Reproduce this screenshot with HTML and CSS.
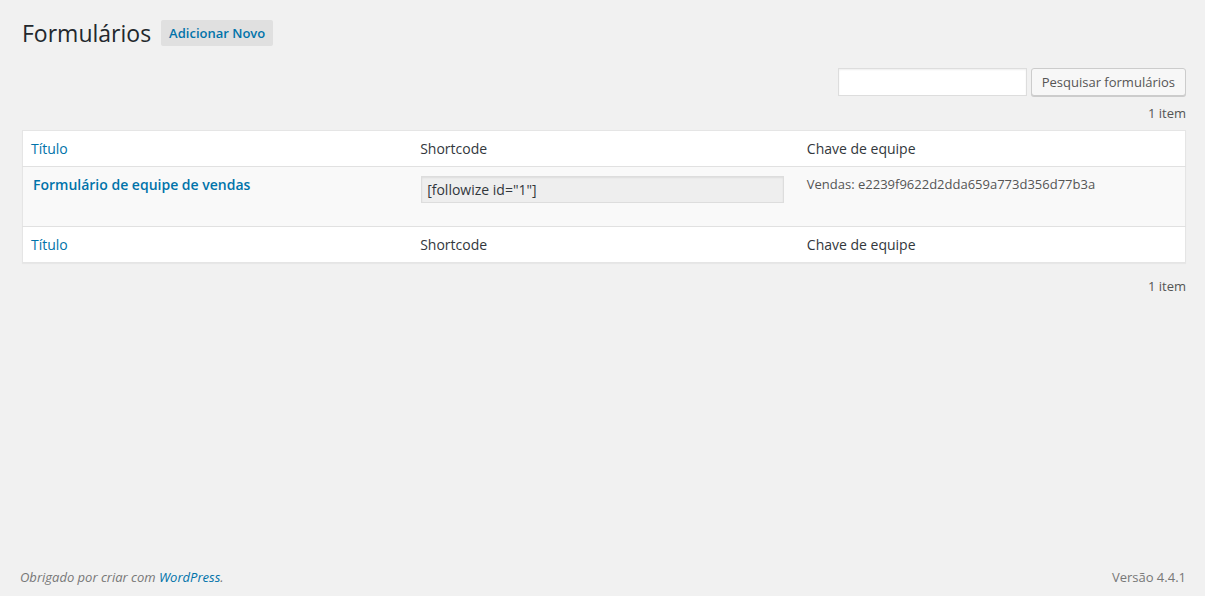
FILE: index.html
```html
<!DOCTYPE html>
<html lang="pt-BR">
<head>
<meta charset="utf-8">
<title>Formulários</title>
<link rel="stylesheet" href="styles.css">
</head>
<body>
<div class="wrap">
  <div class="page-head">
    <h1 class="page-title">Formulários</h1>
    <a class="page-title-action" href="#">Adicionar Novo</a>
  </div>
  <div class="search-box">
    <input class="search-input" type="search" aria-label="Pesquisar formulários">
    <button class="button" type="button">Pesquisar formulários</button>
  </div>
  <div class="tablenav"><span class="displaying-num">1 item</span></div>
  <table class="widefat">
    <colgroup><col><col><col></colgroup>
    <thead>
      <tr>
        <th class="col-title"><a href="#">Título</a></th>
        <th class="col-code">Shortcode</th>
        <th>Chave de equipe</th>
      </tr>
    </thead>
    <tbody>
      <tr class="row">
        <td class="cell-title"><a class="row-title" href="#">Formulário de equipe de vendas</a></td>
        <td class="cell-code"><input class="code-input" type="text" readonly value="[followize id=&quot;1&quot;]"></td>
        <td class="cell-key">Vendas: e2239f9622d2dda659a773d356d77b3a</td>
      </tr>
    </tbody>
    <tfoot>
      <tr>
        <th class="col-title"><a href="#">Título</a></th>
        <th class="col-code">Shortcode</th>
        <th>Chave de equipe</th>
      </tr>
    </tfoot>
  </table>
  <div class="tablenav bottom"><span class="displaying-num">1 item</span></div>
</div>
<footer class="footer">
  <span class="thanks">Obrigado por criar com <a href="#">WordPress</a>.</span>
  <span class="version">Versão 4.4.1</span>
</footer>
</body>
</html>
```

FILE: styles.css
```css
* { box-sizing: border-box; }
html, body { margin: 0; padding: 0; }
body {
  background: #f1f1f1;
  color: #444;
  font-family: "Open Sans", "DejaVu Sans", sans-serif;
  font-size: 13px;
  line-height: 1.4em;
  min-height: 100vh;
  display: flex;
  flex-direction: column;
}
a { color: #0073aa; text-decoration: none; }

.wrap {
  margin: 10px 19px 0 22px;
}
.page-head {
  display: flex;
  align-items: center;
  padding: 9px 0 4px 0;
}
.page-title {
  margin: 0;
  font-size: 23px;
  font-weight: 400;
  line-height: 29px;
  color: #23282d;
}
.page-title-action {
  margin-left: 10px;
  padding: 0 8px;
  height: 26px;
  line-height: 26px;
  background: #e0e0e0;
  border-radius: 2px;
  font-weight: 600;
  font-size: 13px;
  color: #0073aa;
  margin-top: -1px;
}
.search-box {
  display: flex;
  justify-content: flex-end;
  gap: 4px;
  margin-top: 16px;
}
.search-input {
  width: 189px;
  height: 28px;
  margin: 0;
  border: 1px solid #ddd;
  background: #fff;
  box-shadow: inset 0 1px 2px rgba(0,0,0,.07);
  font: inherit;
}
.button {
  height: 28px;
  margin: 0;
  padding: 0 10px 1px;
  border: 1px solid #ccc;
  border-radius: 3px;
  background: #f7f7f7;
  box-shadow: 0 1px 0 #ccc;
  color: #555;
  font-family: inherit;
  font-size: 13px;
  line-height: 26px;
  white-space: nowrap;
}
.tablenav {
  display: flex;
  justify-content: flex-end;
  height: 18px;
  margin: 8px 0 8px;
  line-height: 18px;
}
.tablenav.bottom { margin-top: 14px; }
.displaying-num { color: #555; }

.widefat {
  width: 100%;
  border-collapse: collapse;
  table-layout: fixed;
  background: #fff;
  border: 1px solid #e5e5e5;
  box-shadow: 0 1px 1px rgba(0,0,0,.04);
}
.widefat col { width: 33.333%; }
.widefat th {
  text-align: left;
  font-weight: 400;
  font-size: 14px;
  line-height: 19px;
  color: #32373c;
  padding: 8px 9px;
  height: 35px;
}
.widefat th.col-title { padding-left: 8px; }
.widefat th.col-code { padding-left: 10px; }
.widefat thead th { border-bottom: 1px solid #e1e1e1; }
.widefat tfoot th { border-top: 1px solid #e1e1e1; }
.row { background: #f9f9f9; }
.row td {
  vertical-align: top;
  padding: 8px 10px;
  height: 60px;
}
.row-title {
  font-size: 14px;
  font-weight: 600;
  line-height: 20px;
  display: block;
}
.row td.cell-code { padding-left: 11px; }
.row td.cell-key { padding-left: 9px; }
.code-input {
  display: block;
  margin-top: 1px;
  width: 363px;
  height: 27px;
  padding: 0 5px;
  border: 1px solid #ddd;
  background: #eee;
  box-shadow: inset 0 1px 2px rgba(0,0,0,.07);
  color: #32373c;
  font-family: inherit;
  font-size: 14px;
}
.cell-key {
  color: #555;
  font-size: 13px;
  line-height: 19px;
}

.footer {
  margin-top: auto;
  display: flex;
  justify-content: space-between;
  padding: 0 19px 10px 20px;
  line-height: 18px;
  color: #555;
  font-size: 13px;
}
.thanks { font-style: italic; color: #777; }
.thanks a { color: #0073aa; }
.version { color: #777; }
```
